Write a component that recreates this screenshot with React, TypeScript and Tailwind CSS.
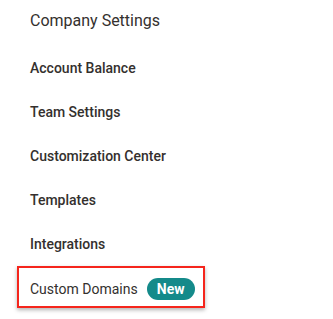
const ITEMS = ['Account Balance', 'Team Settings', 'Customization Center', 'Templates', 'Integrations'];

export default function App() {
  return (
    <div className="w-[333px] h-[319px] bg-white font-['Roboto',sans-serif] text-[#34302e]">
      <div className="flex items-center h-[42px] pl-[30px] text-[16px]">Company Settings</div>
      <div className="pt-[4px]">
        {ITEMS.map(item => (
          <div key={item} className="flex items-center h-[44px] pl-[30px] text-[14px] font-medium">
            {item}
          </div>
        ))}
      </div>
      <div className="ml-[17px] w-[188px] h-[42px] border-2 border-[#f5251c] shadow-[0_2px_4px_rgba(0,0,0,0.3)] flex items-center pl-[11px] pt-[4px]">
        <span className="text-[14px]">Custom Domains</span>
        <span className="ml-[9px] h-[22px] w-[48px] rounded-full bg-[#148a8a] text-white text-[14px] font-bold flex items-center justify-center">
          New
        </span>
      </div>
    </div>
  );
}
